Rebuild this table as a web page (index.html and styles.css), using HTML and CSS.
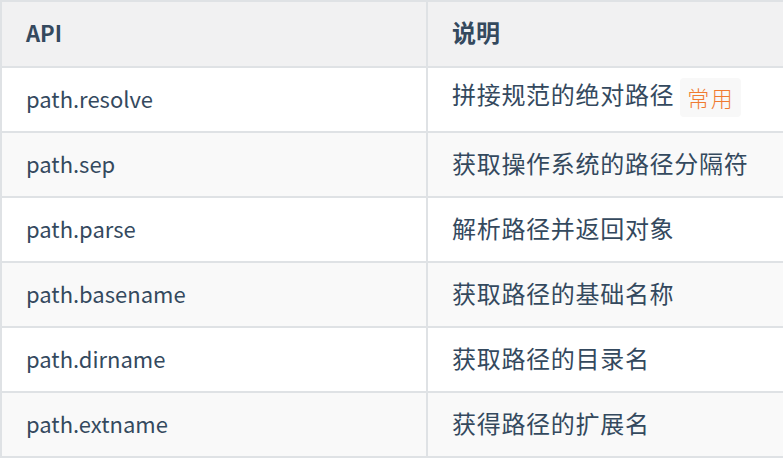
FILE: index.html
```html
<!DOCTYPE html>
<html lang="zh">
<head>
<meta charset="utf-8">
<link rel="stylesheet" href="styles.css">
</head>
<body>
<table class="api-table">
  <thead>
    <tr><th class="col-api">API</th><th class="col-desc">说明</th></tr>
  </thead>
  <tbody>
    <tr><td>path.resolve</td><td class="desc">拼接规范的绝对路径<span class="badge">常用</span></td></tr>
    <tr><td>path.sep</td><td class="desc">获取操作系统的路径分隔符</td></tr>
    <tr><td>path.parse</td><td class="desc">解析路径并返回对象</td></tr>
    <tr><td>path.basename</td><td class="desc">获取路径的基础名称</td></tr>
    <tr><td>path.dirname</td><td class="desc">获取路径的目录名</td></tr>
    <tr><td>path.extname</td><td class="desc">获得路径的扩展名</td></tr>
  </tbody>
</table>
</body>
</html>
```
FILE: styles.css
```css
html, body {
  margin: 0;
  padding: 0;
  background: #fff;
}
.api-table {
  border-collapse: collapse;
  width: 1000px;
  table-layout: fixed;
  font-family: "Noto Sans CJK SC", "Noto Sans", sans-serif;
  font-size: 22px;
  color: #34495e;
}
.api-table th,
.api-table td {
  border: 2px solid #dfe2e5;
  padding: 0 24px 4px;
  height: 59px;
  text-align: left;
  vertical-align: middle;
  line-height: 30px;
}
.api-table th {
  background: #f1f1f2;
  font-weight: 700;
  height: 60px;
}
.api-table th.col-desc {
  font-size: 24px;
}
.col-api { width: 376px; }
.api-table td.desc {
  font-size: 24px;
  letter-spacing: 0.7px;
}
.api-table tbody tr:nth-child(even) td {
  background: #f9f9f9;
}
.badge {
  display: inline-block;
  margin-left: 6px;
  padding: 4px 7px;
  background: #f8f8f8;
  color: #f07a30;
  font-size: 22px;
  font-weight: 300;
  line-height: 31px;
  border-radius: 4px;
  letter-spacing: 1.5px;
  vertical-align: middle;
}
```
